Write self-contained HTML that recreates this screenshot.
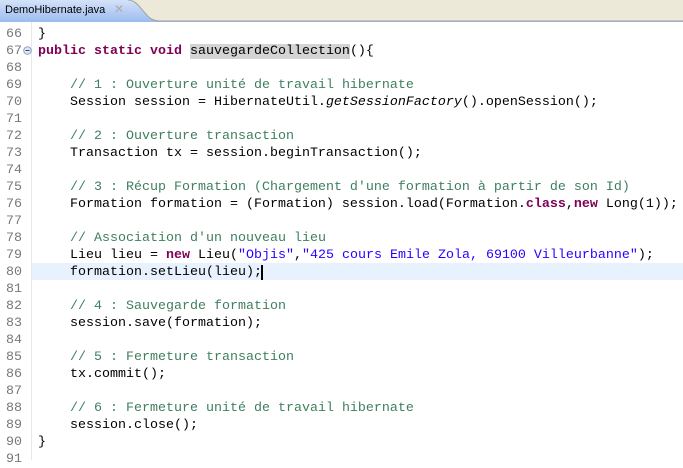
<!DOCTYPE html>
<html><head><style>
body{margin:0;width:683px;height:460px;overflow:hidden;background:#fff;font-family:"Liberation Mono",monospace;}
#tabbar{position:absolute;left:0;top:0;width:683px;height:22px;background:#ece9d8;}
#tab{position:absolute;left:0;top:0;}
#tabtxt{position:absolute;left:5px;top:4px;font:11px "Liberation Sans",sans-serif;color:#000;}
#x{position:absolute;left:114px;top:2px;font:bold 12px "DejaVu Sans",sans-serif;color:#aaa;}
#gut{position:absolute;left:0;top:22px;width:31px;height:438px;background:#fff;border-right:1px solid #e8e8e8;}
.ln{position:absolute;left:0;width:22px;text-align:right;font-size:13.33px;color:#787878;line-height:17px;}
.cl{position:absolute;left:38px;font-size:13.33px;line-height:17px;white-space:pre;color:#000;}
.k{color:#7f0055;font-weight:bold}.c{color:#3f7f5f}.s{color:#2a00ff}.i{font-style:italic}
#hl{position:absolute;left:32px;top:263px;width:651px;height:17px;background:#e8f2fe;}
</style></head><body>
<div id="tabbar">
<svg id="tab" width="683" height="22"><defs><linearGradient id="g" x1="0" y1="0" x2="0" y2="1"><stop offset="0" stop-color="#d4e2f8"/><stop offset="1" stop-color="#9cbcef"/></linearGradient></defs>
<path d="M0 0 H128 C136 0 140 8 146 14 C150 19 154 21 160 21 H683 V22 H0 Z" fill="url(#g)"/>
<path d="M128 0 C136 0 140 8 146 14 C150 19 154 21 160 21 H683" fill="none" stroke="#a0a0a0"/></svg>
<div id="tabtxt">DemoHibernate.java</div><div id="x">✕</div>
</div>
<div id="gut"></div>
<div id="hl"></div>
<div id="lines"></div>
<svg style="position:absolute;left:23px;top:46px" width="9" height="9"><circle cx="4.5" cy="4.5" r="3.8" fill="#dde6f4" stroke="#8aa0c4"/><line x1="2.5" y1="4.5" x2="6.5" y2="4.5" stroke="#445"/></svg>
<script>
var L=["}",
'<span class="k">public static void</span> <span style="background:#d4d4d4">sauvegardeCollection</span>(){',
"",
'    <span class="c">// 1 : Ouverture unité de travail hibernate</span>',
'    Session session = HibernateUtil.<span class="i">getSessionFactory</span>().openSession();',
"",
'    <span class="c">// 2 : Ouverture transaction</span>',
'    Transaction tx = session.beginTransaction();',
"",
'    <span class="c">// 3 : Récup Formation (Chargement d\'une formation à partir de son Id)</span>',
'    Formation formation = (Formation) session.load(Formation.<span class="k">class</span>,<span class="k">new</span> Long(1));',
"",
'    <span class="c">// Association d\'un nouveau lieu</span>',
'    Lieu lieu = <span class="k">new</span> Lieu(<span class="s">"Objis"</span>,<span class="s">"425 cours Emile Zola, 69100 Villeurbanne"</span>);',
'    formation.setLieu(lieu);<span style="border-left:2px solid #000;margin-left:-1px"></span>',
"",
'    <span class="c">// 4 : Sauvegarde formation</span>',
'    session.save(formation);',
"",
'    <span class="c">// 5 : Fermeture transaction</span>',
'    tx.commit();',
"",
'    <span class="c">// 6 : Fermeture unité de travail hibernate</span>',
'    session.close();',
"}"];
var h="";for(var i=0;i<L.length;i++){var t=26+i*17;h+='<div class="ln" style="top:'+t+'px">'+(66+i)+'</div><div class="cl" style="top:'+t+'px">'+L[i]+'</div>';}
h+='<div class="ln" style="top:'+(26+25*17)+'px">91</div>';
document.getElementById("lines").innerHTML=h;
</script>
</body></html>
